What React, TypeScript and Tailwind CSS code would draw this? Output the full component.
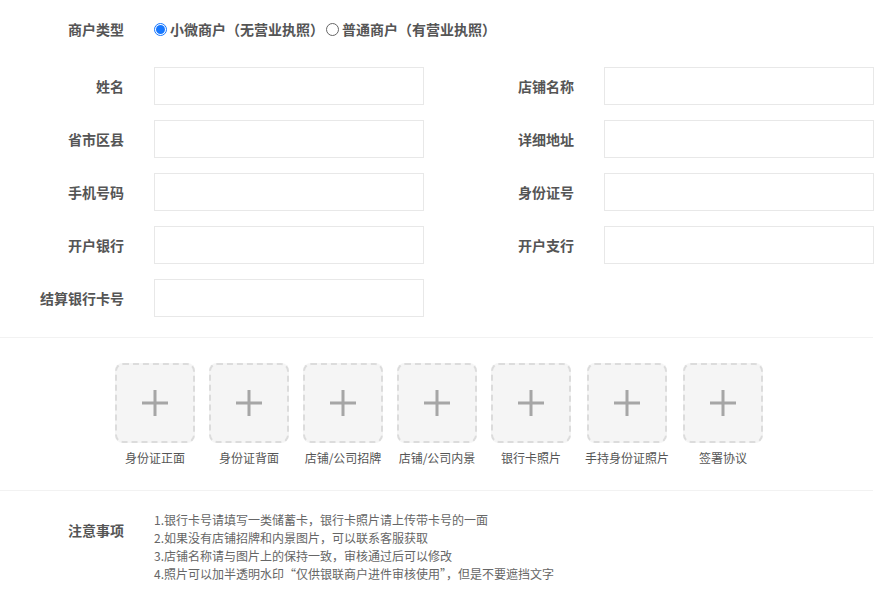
import React from "react";

const font = { fontFamily: '"Microsoft YaHei", "Noto Sans CJK SC", "Noto Sans", sans-serif' };

function Field({ label, wide }: { label: string; wide?: boolean }) {
  return (
    <div className="flex items-center">
      <div className={`${wide ? "w-[150px]" : "w-[124px]"} text-right text-[14px] font-bold text-[#555]`}>{label}</div>
      <div className="ml-[30px] h-[38px] w-[270px] border border-[#e8e8e8] bg-white" />
    </div>
  );
}

const uploads = ["身份证正面", "身份证背面", "店铺/公司招牌", "店铺/公司内景", "银行卡照片", "手持身份证照片", "签署协议"];

const notes = [
  "1.银行卡号请填写一类储蓄卡，银行卡照片请上传带卡号的一面",
  "2.如果没有店铺招牌和内景图片，可以联系客服获取",
  "3.店铺名称请与图片上的保持一致，审核通过后可以修改",
  "4.照片可以加半透明水印“仅供银联商户进件审核使用”，但是不要遮挡文字",
];

export default function App() {
  const rows: [string, string | null][] = [
    ["姓名", "店铺名称"],
    ["省市区县", "详细地址"],
    ["手机号码", "身份证号"],
    ["开户银行", "开户支行"],
    ["结算银行卡号", null],
  ];
  return (
    <div className="min-h-[604px] w-[883px] bg-white pt-[19px]" style={font}>
      <div className="flex h-[20px] items-center">
        <div className="w-[124px] text-right text-[14px] font-bold text-[#555]">商户类型</div>
        <div className="ml-[30px] flex items-center text-[14px] font-bold text-[#555]">
          <span className="flex h-[13px] w-[13px] items-center justify-center rounded-full border border-[#1677ff]">
            <span className="h-[9px] w-[9px] rounded-full bg-[#1677ff]" />
          </span>
          <span className="ml-[3px]">小微商户（无营业执照）</span>
          <span className="ml-[2px] h-[13px] w-[13px] rounded-full border border-[#666]" />
          <span className="ml-[3px]">普通商户（有营业执照）</span>
        </div>
      </div>

      <div className="mt-[28px] flex flex-col gap-[15px]">
        {rows.map(([a, b]) => (
          <div key={a} className="flex">
            <Field label={a} />
            {b && <Field label={b} wide />}
          </div>
        ))}
      </div>

      <div className="mt-[20px] h-px w-[873px] bg-[#f2f2f2]" />

      <div className="ml-[115px] mt-[25px] flex items-start gap-[14px]">
        {uploads.map((u) => (
          <div key={u} className="flex flex-col items-center">
            <div className="flex h-[80px] w-[80px] items-center justify-center rounded-[8px] border-2 border-dashed border-[#dcdcdc] bg-[#f5f5f5]">
              <svg width="26" height="26" viewBox="0 0 26 26">
                <rect x="11.5" y="0" width="3" height="26" fill="#a6a6a6" />
                <rect x="0" y="11.5" width="26" height="3" fill="#a6a6a6" />
              </svg>
            </div>
            <div className="mt-[7px] whitespace-nowrap text-[12px] leading-[16px] text-[#555]">{u}</div>
          </div>
        ))}
      </div>

      <div className="mt-[24px] h-px w-[873px] bg-[#f2f2f2]" />

      <div className="mt-[20px] flex">
        <div className="w-[124px] pt-[10px] text-right text-[14px] font-bold leading-[18px] text-[#555]">注意事项</div>
        <div className="ml-[30px] flex flex-col text-[12px] leading-[18px] text-[#666]">
          {notes.map((n) => (
            <div key={n}>{n}</div>
          ))}
        </div>
      </div>
    </div>
  );
}
